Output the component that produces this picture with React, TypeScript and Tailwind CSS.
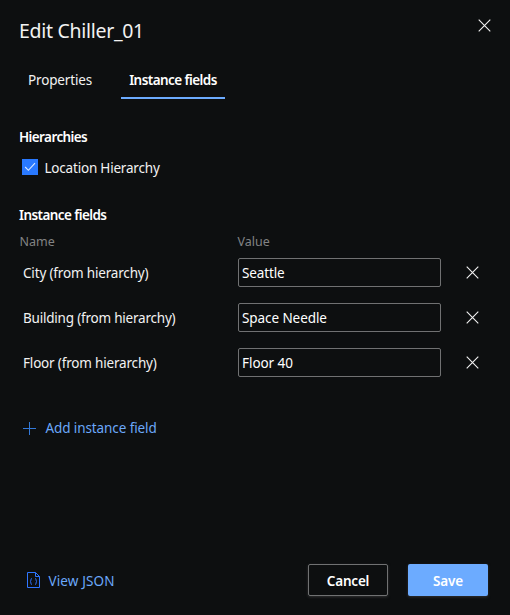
import React from "react";

function CloseIcon() {
  return (
    <svg width="13" height="13" viewBox="0 0 13 13" fill="none" stroke="#f2f2f2" strokeWidth="1.1">
      <path d="M0.7 0.7 12.3 12.3M12.3 0.7 0.7 12.3" />
    </svg>
  );
}

const fields = [
  { name: "City (from hierarchy)", value: "Seattle", spacing: "tracking-[-0.17px]", valueSpacing: "tracking-[-0.12px]" },
  { name: "Building (from hierarchy)", value: "Space Needle", spacing: "tracking-[-0.21px]", valueSpacing: "tracking-[-0.08px]" },
  { name: "Floor (from hierarchy)", value: "Floor 40", spacing: "tracking-[-0.18px]", valueSpacing: "tracking-[-0.05px]" },
];

export default function App() {
  return (
    <div className="flex h-[615px] w-[510px] flex-col overflow-hidden bg-[#0d0f10] font-['Noto_Sans','Open_Sans',sans-serif] text-[13.5px] leading-5 whitespace-nowrap text-[#f2f2f2]">
      <header className="flex h-[61px] items-start justify-between pt-[19px] pr-[19px] pl-[19px]">
        <h1 className="text-[19.5px] leading-6 tracking-[-0.3px]">Edit Chiller_01</h1>
        <button aria-label="Close">
          <CloseIcon />
        </button>
      </header>

      <nav className="flex h-[38px] pl-5">
        <button className="mr-[21px] w-20 tracking-[-0.17px]">Properties</button>
        <button className="w-[104px] border-b-2 border-[#6cabff] pt-0.5 font-semibold tracking-[-0.56px] text-white">Instance fields</button>
      </nav>

      <main className="flex flex-1 flex-col pt-7 pl-[19px]">
        <h2 className="font-semibold tracking-[-0.6px] text-white">Hierarchies</h2>
        <label className="mt-[10px] flex h-5 items-center pl-[3px]">
          <span className="flex size-4 items-center justify-center bg-[#2979ff]">
            <svg width="12" height="10" viewBox="0 0 12 10" fill="none" stroke="#dceaff" strokeWidth="1.1">
              <path d="M1.2 5 4.4 8.3 11 1.2" />
            </svg>
          </span>
          <span className="ml-[6.5px] pt-0.5 tracking-[-0.2px]">Location Hierarchy</span>
        </label>

        <h2 className="mt-7 font-semibold tracking-[-0.58px] text-white">Instance fields</h2>
        <div className="mt-[7px] flex text-[12.5px] text-[#828384]">
          <span className="w-[218.5px] pl-[0.5px]">Name</span>
          <span>Value</span>
        </div>

        <div className="mt-1.5 flex flex-col gap-4">
          {fields.map((f) => (
            <div key={f.name} className="flex h-[29px] items-center">
              <span className={`w-[219px] pl-1 ${f.spacing}`}>{f.name}</span>
              <div className={`flex h-[29px] w-[203px] items-center rounded-[2px] border border-[#707172] pl-[3px] text-white ${f.valueSpacing}`}>{f.value}</div>
              <button className="ml-[25px]" aria-label="Remove">
                <CloseIcon />
              </button>
            </div>
          ))}
        </div>

        <button className="mt-[41px] flex items-center pl-1 text-[#6ba8fa]">
          <svg width="13" height="13" viewBox="0 0 13 13" fill="none" stroke="#3279da">
            <path d="M0 6.5H13M6.5 0V13" />
          </svg>
          <span className="ml-[9.5px] tracking-[-0.1px]">Add instance field</span>
        </button>
      </main>

      <footer className="flex h-[51px] items-start pr-[22px] pl-[27px]">
        <button className="flex h-8 items-center text-[#6ba8fa]">
          <svg width="13" height="16" viewBox="0 0 13 16" fill="none" stroke="#2f76ff">
            <path d="M.5.5H8.5L12.5 4.5V15.5H.5ZM8.5.5V4.5H12.5" />
            <path d="M5 6.5Q3.7 6.5 3.9 8Q4.1 9.3 3 9.5Q4.1 9.7 3.9 11Q3.7 12.5 5 12.5M8 6.5Q9.3 6.5 9.1 8Q8.9 9.3 10 9.5Q8.9 9.7 9.1 11Q9.3 12.5 8 12.5" opacity=".85" />
          </svg>
          <span className="ml-[8.5px] pt-0.5 tracking-[0.12px]">View JSON</span>
        </button>
        <button className="ml-auto h-8 w-20 rounded-[2px] border border-[#707172] pt-0.5 font-semibold tracking-[-0.2px] text-white shadow-[0_1px_3px_#303132]">Cancel</button>
        <button className="ml-5 h-8 w-20 rounded-[2px] bg-[#6cabff] pt-0.5 font-semibold tracking-[-0.1px] text-white shadow-[0_1px_3px_#303132]">Save</button>
      </footer>
    </div>
  );
}
